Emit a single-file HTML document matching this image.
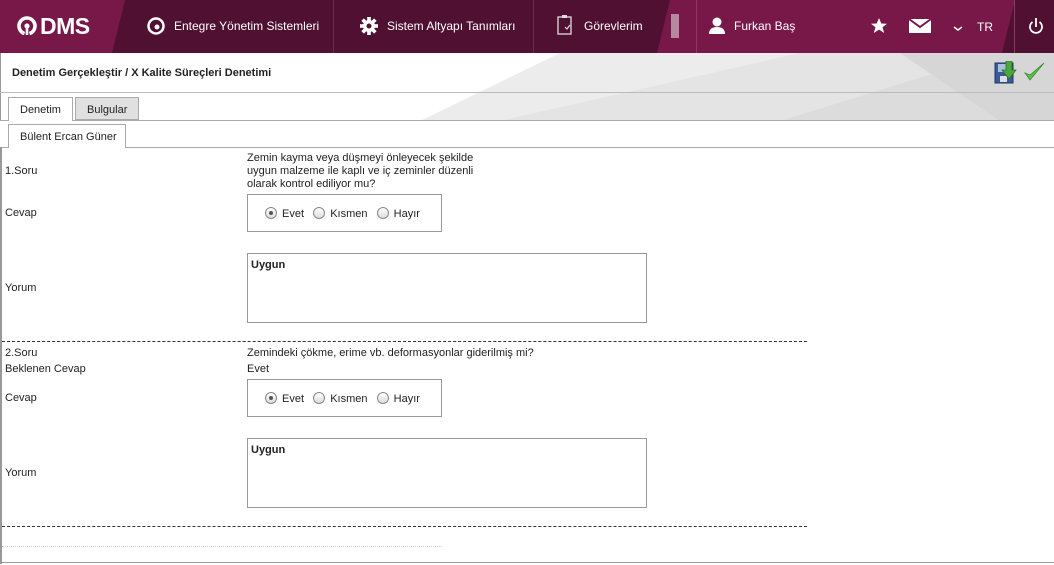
<!DOCTYPE html>
<html><head><meta charset="utf-8"><style>
*{margin:0;padding:0;box-sizing:border-box}
body{width:1054px;height:565px;overflow:hidden;background:#fff;font-family:"Liberation Sans",sans-serif;font-size:11px;color:#222;position:relative}
.a{position:absolute}
.nav{color:#fff;font-size:12px}
.rb{border:1px solid #999;background:#fff}
.radio{display:inline-block;width:12px;height:12px;border:1px solid #888;border-radius:50%;background:linear-gradient(#fff,#ddd);vertical-align:-2px;margin-right:5px;position:relative}
.radio.on:after{content:"";position:absolute;left:3px;top:3px;width:4px;height:4px;border-radius:50%;background:#555}
.dash{border-top:1px dashed #333;height:0}
</style></head><body>
<svg class="a" style="left:0;top:0" width="1054" height="53">
<rect width="1054" height="53" fill="#4f1032"/>
<polygon points="0,0 125,0 112,53 0,53" fill="#771849"/>
<polygon points="670,0 1015,0 1002,53 657,53" fill="#771849"/>
<line x1="333.5" y1="0" x2="333.5" y2="53" stroke="#6e2a4d"/>
<line x1="533.5" y1="0" x2="533.5" y2="53" stroke="#6e2a4d"/>
<line x1="696.5" y1="0" x2="696.5" y2="53" stroke="#8a3a62"/>
<line x1="1014.5" y1="0" x2="1014.5" y2="53" stroke="#8a3a62"/>
<rect x="671" y="14" width="8" height="24" fill="#b58aa0"/>
<circle cx="156" cy="26" r="7.5" fill="none" stroke="#fff" stroke-width="2.5"/>
<circle cx="157" cy="27" r="2.5" fill="#fff"/>
<g transform="translate(369,26)" fill="#fff">
<circle r="6"/>
<rect x="-1.8" y="-9" width="3.6" height="18"/>
<rect x="-1.8" y="-9" width="3.6" height="18" transform="rotate(45)"/>
<rect x="-1.8" y="-9" width="3.6" height="18" transform="rotate(90)"/>
<rect x="-1.8" y="-9" width="3.6" height="18" transform="rotate(135)"/>
<circle r="2.5" fill="#4f1032"/>
</g>
<rect x="558" y="17" width="13" height="17" fill="none" stroke="#ddd" stroke-width="1.3"/>
<rect x="562" y="15" width="5" height="3" fill="#ddd"/>
<path d="M565 27l2 2 3-4" fill="none" stroke="#ddd" stroke-width="1.2"/>
<circle cx="717" cy="22" r="4.5" fill="#fff"/><path d="M709 34q0-7 8-7t8 7z" fill="#fff"/>
<polygon points="879,18 881.3,23.5 887,23.8 882.5,27.3 884.2,33 879,29.6 873.8,33 875.5,27.3 871,23.8 876.7,23.5" fill="#fff"/>
<rect x="909" y="19" width="22" height="14" fill="#fff"/><path d="M909 19l11 8 11-8" fill="none" stroke="#771849" stroke-width="2"/>
<path d="M954 27l4 3 4-3" fill="none" stroke="#fff" stroke-width="1.5"/>
<path d="M1032.5 22a6 6 0 1 0 7 0" fill="none" stroke="#fff" stroke-width="1.8"/><line x1="1036" y1="18" x2="1036" y2="27" stroke="#fff" stroke-width="1.8"/>
<path d="M24.5 33.6A8 8 0 1 1 29.5 33.6" fill="none" stroke="#fff" stroke-width="3.6"/>
<circle cx="27" cy="26" r="2.6" fill="#fff"/>
<rect x="25.7" y="26" width="2.6" height="9" fill="#fff"/>
</svg>
<div class="a nav" style="left:40px;top:13px;font-size:23px;font-weight:bold;letter-spacing:-0.5px">DMS</div>
<div class="a nav" style="left:174px;top:19px">Entegre Yönetim Sistemleri</div>
<div class="a nav" style="left:387px;top:19px">Sistem Altyapı Tanımları</div>
<div class="a nav" style="left:584px;top:19px">Görevlerim</div>
<div class="a nav" style="left:734px;top:19px">Furkan Baş</div>
<div class="a nav" style="left:977px;top:20px">TR</div>
<svg class="a" style="left:0;top:53px" width="1054" height="68">
<rect width="1054" height="68" fill="#fff"/>
<polygon points="420,68 560,0 1054,0 1054,68" fill="#ececec"/>
<polygon points="500,68 800,0 1054,0 1054,68" fill="#e4e4e4"/>
<polygon points="780,68 1000,0 1054,0 1054,68" fill="#dcdcdc"/>
<polygon points="900,0 1054,0 1054,68 1000,68" fill="#d6d6d6"/>
<rect x="0" y="0" width="1" height="68" fill="#999"/>
</svg>
<div class="a" style="left:0;top:92px;width:1054px;border-top:1px solid #bbb"></div>
<div class="a" style="left:12px;top:67px;font-weight:bold;font-size:11px">Denetim Gerçekleştir / X Kalite Süreçleri Denetimi</div>
<svg class="a" style="left:994px;top:61px" width="52" height="24">
<rect x="1" y="2" width="18" height="20" fill="#3a5a9a" stroke="#1f3466"/>
<rect x="4" y="3" width="12" height="8" fill="#a9bfe0"/>
<rect x="6" y="15" width="7" height="6" fill="#ddd"/>
<path d="M12 0h6v9h4l-7 9-7-9h4z" fill="#4aa83a" stroke="#2b6e22" stroke-width=".8"/>
<path d="M31 12l5 7 14-17-14 12z" fill="#5cc04a" stroke="#3a8a2a" stroke-width=".8"/>
</svg>
<div class="a" style="left:0;top:120px;width:1054px;border-top:1px solid #aaa"></div>
<div class="a" style="left:8px;top:97px;width:65px;height:24px;border:1px solid #aaa;border-bottom:none;background:#fff;padding:6px 0 0 11px">Denetim</div>
<div class="a" style="left:75px;top:97px;width:64px;height:23px;border:1px solid #aaa;background:#e0e0e0;padding:6px 0 0 11px">Bulgular</div>
<div class="a" style="left:0;top:147px;width:1054px;border-top:1px solid #aaa"></div>
<div class="a" style="left:8px;top:124px;width:118px;height:24px;border:1px solid #aaa;border-bottom:none;background:#fff;padding:6px 0 0 11px">Bülent Ercan Güner</div>
<div class="a" style="left:0;top:147px;width:2px;height:417px;background:#999"></div>
<div class="a" style="left:0;top:562px;width:1054px;border-top:1px solid #999"></div>
<div class="a" style="left:5px;top:165px">1.Soru</div>
<div class="a" style="left:247px;top:152px;line-height:13px">Zemin kayma veya düşmeyi önleyecek şekilde<br>uygun malzeme ile kaplı ve iç zeminler düzenli<br>olarak kontrol ediliyor mu?</div>
<div class="a" style="left:5px;top:207px">Cevap</div>
<div class="a rb" style="left:247px;top:194px;width:195px;height:38px;padding:12px 0 0 17px"><span class="radio on"></span>Evet&nbsp;&nbsp;&nbsp;<span class="radio"></span>Kısmen&nbsp;&nbsp;&nbsp;<span class="radio"></span>Hayır</div>
<div class="a" style="left:5px;top:282px">Yorum</div>
<div class="a rb" style="left:247px;top:253px;width:400px;height:70px;padding:5px 3px;font-weight:bold">Uygun</div>
<div class="a dash" style="left:2px;top:341px;width:805px"></div>
<div class="a" style="left:5px;top:347px">2.Soru</div>
<div class="a" style="left:247px;top:347px">Zemindeki çökme, erime vb. deformasyonlar giderilmiş mi?</div>
<div class="a" style="left:5px;top:363px">Beklenen Cevap</div>
<div class="a" style="left:247px;top:363px">Evet</div>
<div class="a" style="left:5px;top:392px">Cevap</div>
<div class="a rb" style="left:247px;top:379px;width:195px;height:38px;padding:12px 0 0 17px"><span class="radio on"></span>Evet&nbsp;&nbsp;&nbsp;<span class="radio"></span>Kısmen&nbsp;&nbsp;&nbsp;<span class="radio"></span>Hayır</div>
<div class="a" style="left:5px;top:467px">Yorum</div>
<div class="a rb" style="left:247px;top:438px;width:400px;height:70px;padding:5px 3px;font-weight:bold">Uygun</div>
<div class="a dash" style="left:2px;top:526px;width:805px"></div>
<div class="a" style="left:2px;top:546px;width:440px;border-top:1px dotted #ccc"></div>
</body></html>
